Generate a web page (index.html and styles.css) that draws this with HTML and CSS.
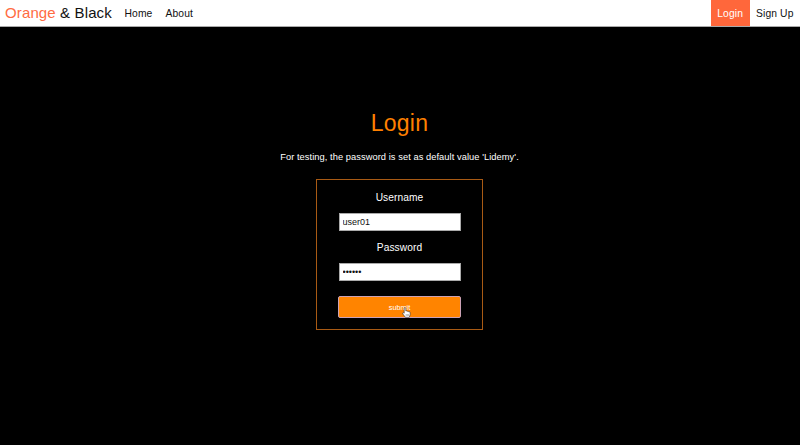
FILE: index.html
```html
<!DOCTYPE html>
<html lang="en">
<head>
<meta charset="utf-8">
<title>Orange &amp; Black</title>
<link rel="stylesheet" href="styles.css">
</head>
<body>
<nav class="navbar">
  <a class="brand"><span class="brand-accent">Orange</span> &amp; Black</a>
  <a class="nav-link">Home</a>
  <a class="nav-link">About</a>
  <a class="nav-link active">Login</a>
  <a class="nav-link">Sign Up</a>
</nav>
<main class="page">
  <h1 class="title">Login</h1>
  <p class="hint">For testing, the password is set as default value 'Lidemy'.</p>
  <form class="card">
    <label class="label" for="username">Username</label>
    <input class="field" id="username" type="text" value="user01">
    <label class="label" for="password">Password</label>
    <input class="field" id="password" type="text" value="••••••">
    <button class="submit" type="button">submit
      <svg class="cursor" viewBox="0 0 9 11" width="9" height="11"><path d="M2.2 6.2V1.5Q2.2.6 3 .6T3.8 1.5V4Q4.8 3.6 5.2 4.3Q6.2 4 6.6 4.7Q8.1 4.4 8.2 5.8V7.7L7.2 10.3H3.4L.7 6.8Q.3 5.8 1.2 5.6Z" fill="#fff" stroke="#333" stroke-width=".6"/><path d="M4.2 7v2M5.4 7v2M6.6 7v2" stroke="#555" stroke-width=".4"/></svg>
    </button>
  </form>
</main>
</body>
</html>
```
FILE: styles.css
```css
* { box-sizing: border-box; }
body {
  margin: 0;
  height: 445px;
  overflow: hidden;
  background: #000;
  color: #fff;
  font-family: "Liberation Sans", Arial, sans-serif;
}
.navbar {
  display: flex;
  align-items: stretch;
  height: 27px;
  background: #fff;
  border-bottom: 1px solid #aaa;
  color: #111;
  line-height: 26px;
  white-space: nowrap;
}
.brand {
  width: 118px;
  padding-left: 5px;
  font-size: 15px;
  letter-spacing: 0.13px;
}
.brand-accent { color: #ff6b42; }
.nav-link {
  height: 26px;
  padding: 0 6.5px;
  font-size: 10.3px;
  line-height: 27px;
  letter-spacing: 0.12px;
}
.nav-link.active {
  margin-left: auto;
  background: #ff673b;
  color: #fff;
}
.page {
  display: flex;
  flex-direction: column;
  align-items: center;
}
.title {
  margin: 81px 1px 0 0;
  font-size: 23px;
  font-weight: 400;
  line-height: 30px;
  letter-spacing: 0.2px;
  color: #ff8000;
}
.hint {
  margin: 12px 1px 0 0;
  font-size: 9.3px;
  line-height: 14px;
  letter-spacing: 0.06px;
}
.card {
  display: flex;
  flex-direction: column;
  align-items: center;
  width: 167px;
  height: 151px;
  margin: 15px 1px 0 0;
  border: 1px solid #a85a14;
}
.label {
  margin-top: 11px;
  height: 14px;
  font-size: 10.2px;
  line-height: 14px;
  letter-spacing: 0.08px;
}
.field {
  width: 122px;
  height: 18px;
  margin-top: 8px;
  padding: 0 3px;
  border: 1px solid #aaa;
  border-radius: 0;
  background: #fff;
  color: #111;
  font: 9px "Liberation Sans", Arial, sans-serif;
}
.field + .label { margin-top: 10px; }
.submit {
  position: relative;
  width: 123px;
  height: 22px;
  margin-top: 15px;
  padding: 0;
  border: 1px solid #cba2b5;
  border-radius: 2px;
  background: #ff8400;
  color: #fff;
  font: 7.3px "Liberation Sans", Arial, sans-serif;
}
.cursor {
  position: absolute;
  left: 63px;
  top: 10px;
}
```
